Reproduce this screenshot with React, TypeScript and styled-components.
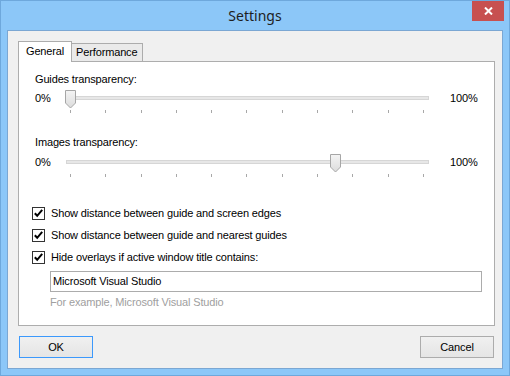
import React from "react";
import styled, { createGlobalStyle } from "styled-components";

const Global = createGlobalStyle`
  html, body { margin: 0; padding: 0; }
  body { width: 510px; height: 376px; overflow: hidden; background: #8cc7f8; }
  * { box-sizing: border-box; }
`;

const Window = styled.div`
  width: 510px;
  height: 376px;
  border: 1px solid #6ea8dc;
  background: #8cc7f8;
  display: flex;
  flex-direction: column;
  font-family: "Liberation Sans", Arial, sans-serif;
  font-size: 11px;
  letter-spacing: -0.15px;
  color: #000;
`;

const TitleBar = styled.div`
  height: 29px;
  flex: none;
  display: flex;
  align-items: flex-start;
  justify-content: center;
  position: relative;
`;

const Title = styled.div`
  font-family: "Noto Sans", "Open Sans", sans-serif;
  font-size: 14px;
  letter-spacing: 0;
  line-height: 20px;
  margin-top: 5px;
  color: #1e1e1e;
`;

const CloseButton = styled.div`
  position: absolute;
  top: 0;
  right: 5px;
  width: 32px;
  height: 20px;
  background: #c75050;
  display: flex;
  align-items: center;
  justify-content: center;
`;

const Body = styled.div`
  flex: 1;
  margin: 0 6px 6px 6px;
  border: 1px solid #7ba7d3;
  background: #f0f0f0;
  padding: 10px 7px 10px 10px;
  display: flex;
  flex-direction: column;
`;

const TabStrip = styled.div`
  display: flex;
  align-items: flex-end;
  height: 20px;
  position: relative;
  z-index: 1;
`;

const Tab = styled.div<{ $active?: boolean }>`
  height: ${(p) => (p.$active ? 21 : 18)}px;
  margin-bottom: ${(p) => (p.$active ? -1 : 0)}px;
  margin-left: ${(p) => (p.$active ? 0 : -1)}px;
  position: relative;
  z-index: ${(p) => (p.$active ? 2 : 1)};
  border: 1px solid #acacac;
  border-bottom: none;
  background: ${(p) => (p.$active ? "#ffffff" : "#eaeaea")};
  padding: ${(p) => (p.$active ? "3px 7px 0 7px" : "2px 5px 0 4px")};
  line-height: 13px;
  white-space: nowrap;
`;

const Panel = styled.div`
  height: 265px;
  border: 1px solid #adadad;
  background: #fff;
  padding: 11px 0 0 16px;
  display: flex;
  flex-direction: column;
`;

const FieldLabel = styled.div<{ $top: number }>`
  line-height: 13px;
  height: 13px;
  margin-top: ${(p) => p.$top}px;
`;

const SliderRow = styled.div<{ $top: number }>`
  display: flex;
  align-items: flex-start;
  height: 24px;
  margin-top: ${(p) => p.$top}px;
`;

const RangeText = styled.div<{ $w?: number; $ml?: number }>`
  width: ${(p) => (p.$w ? `${p.$w}px` : "auto")};
  margin-left: ${(p) => p.$ml || 0}px;
  line-height: 13px;
  margin-top: 2px;
`;

const Track = styled.div`
  position: relative;
  width: 363px;
  height: 24px;
`;

const Rail = styled.div`
  position: absolute;
  left: 0;
  right: 0;
  top: 6px;
  height: 4px;
  background: #e7e7e7;
  border: 1px solid #d6d6d6;
`;

const Ticks = styled.div`
  position: absolute;
  left: 4px;
  width: 354px;
  top: 20px;
  height: 4px;
  display: flex;
  justify-content: space-between;
`;

const Tick = styled.div`
  width: 1px;
  height: 3px;
  background: #a8a8a8;
`;

const Thumb = styled.svg`
  position: absolute;
  top: 0;
`;

const CheckList = styled.div`
  margin-top: 24px;
  margin-left: -3px;
  display: flex;
  flex-direction: column;
`;

const CheckRow = styled.div`
  height: 22px;
  display: flex;
  align-items: center;
  gap: 6px;
`;

const Box = styled.div`
  width: 13px;
  height: 13px;
  border: 1px solid #333;
  background: #fff;
  display: flex;
  align-items: center;
  justify-content: center;
`;

const TextInput = styled.div`
  margin: 3px 0 0 15px;
  width: 432px;
  height: 21px;
  border: 1px solid #acacac;
  background: #fff;
  padding-left: 2px;
  line-height: 19px;
`;

const Hint = styled.div`
  margin: 4px 0 0 15px;
  color: #a0a0a0;
  line-height: 13px;
`;

const ButtonRow = styled.div`
  margin-top: 10px;
  padding: 0 1px;
  display: flex;
  justify-content: space-between;
`;

const Button = styled.div<{ $default?: boolean }>`
  width: 74px;
  height: 22px;
  border: 1px solid ${(p) => (p.$default ? "#3c99fc" : "#acacac")};
  background: linear-gradient(#f0f0f0, #e5e5e5);
  display: flex;
  align-items: center;
  justify-content: center;
`;

const ThumbShape = ({ left }: { left: number }) => (
  <Thumb width="11" height="19" viewBox="0 0 11 19" style={{ left }}>
    <defs>
      <linearGradient id="tg" x1="0" y1="0" x2="0" y2="1">
        <stop offset="0" stopColor="#f4f4f4" />
        <stop offset="1" stopColor="#dcdcdc" />
      </linearGradient>
    </defs>
    <path d="M0.5 0.5 H10.5 V13 L5.5 18 L0.5 13 Z" fill="url(#tg)" stroke="#a6a6a6" />
  </Thumb>
);

const Slider = ({ value }: { value: number }) => {
  const center = 4.5 + (value / 10) * 353;
  return (
    <Track>
      <Rail />
      <Ticks>
        {Array.from({ length: 11 }).map((_, i) => (
          <Tick key={i} />
        ))}
      </Ticks>
      <ThumbShape left={Math.round(center - 5.5)} />
    </Track>
  );
};

const Check = ({ children }: { children: React.ReactNode }) => (
  <CheckRow>
    <Box>
      <svg width="11" height="11" viewBox="0 0 11 11">
        <path d="M1.8 5.2 L4.2 7.8 L9.2 1.8" fill="none" stroke="#000" strokeWidth="2" />
      </svg>
    </Box>
    <span>{children}</span>
  </CheckRow>
);

export default function App() {
  return (
    <>
      <Global />
      <Window>
        <TitleBar>
          <Title>Settings</Title>
          <CloseButton>
            <svg width="9" height="8" viewBox="0 0 9 8">
              <path d="M1 0.5 L8 7.5 M8 0.5 L1 7.5" stroke="#fff" strokeWidth="2" />
            </svg>
          </CloseButton>
        </TitleBar>
        <Body>
          <TabStrip>
            <Tab $active>General</Tab>
            <Tab>Performance</Tab>
          </TabStrip>
          <Panel>
            <FieldLabel $top={0}>Guides transparency:</FieldLabel>
            <SliderRow $top={4}>
              <RangeText $w={31}>0%</RangeText>
              <Slider value={0} />
              <RangeText $ml={21}>100%</RangeText>
            </SliderRow>
            <FieldLabel $top={22}>Images transparency:</FieldLabel>
            <SliderRow $top={5}>
              <RangeText $w={31}>0%</RangeText>
              <Slider value={7.5} />
              <RangeText $ml={21}>100%</RangeText>
            </SliderRow>
            <CheckList>
              <Check>Show distance between guide and screen edges</Check>
              <Check>Show distance between guide and nearest guides</Check>
              <Check>Hide overlays if active window title contains:</Check>
            </CheckList>
            <TextInput>Microsoft Visual Studio</TextInput>
            <Hint>For example, Microsoft Visual Studio</Hint>
          </Panel>
          <ButtonRow>
            <Button $default>OK</Button>
            <Button>Cancel</Button>
          </ButtonRow>
        </Body>
      </Window>
    </>
  );
}
